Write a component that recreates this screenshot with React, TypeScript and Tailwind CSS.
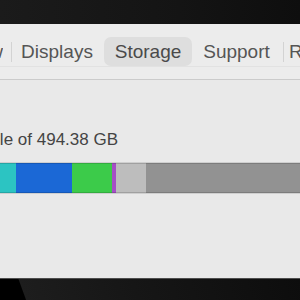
import React from "react";

const font = { fontFamily: '"Liberation Sans", Arial, sans-serif' };

export default function App() {
  return (
    <div
      className="w-[300px] h-[300px] overflow-hidden flex flex-col bg-black"
      style={font}
    >
      {/* top bezel */}
      <div className="h-[24px] shrink-0 bg-[linear-gradient(90deg,#1b1b1b,#141414_60%,#0e0e0e)]" />

      {/* window */}
      <div className="flex-1 flex flex-col bg-[#e9e9e9]">
        {/* toolbar */}
        <div className="h-[56px] shrink-0 flex flex-col bg-[#ececec] border-b border-[#cbcbcb]">
          <div className="h-[13px]" />
          <div className="h-[29px] flex items-center whitespace-nowrap text-[19px] text-[#555555] leading-none overflow-hidden">
            <div className="shrink-0 w-[3px] h-[20px] overflow-hidden relative">
              <span className="absolute right-0 top-0 leading-[20px]">Overview</span>
            </div>
            <div className="ml-[8px] w-px h-[20px] bg-[#d3d3d3] shrink-0" />
            <div className="w-[90px] h-full flex items-center justify-center shrink-0">
              Displays
            </div>
            <div className="ml-[2px] w-[88px] h-full flex items-center justify-center rounded-[7px] bg-[#dedede] text-[#4a4a4a] shrink-0">
              Storage
            </div>
            <div className="ml-px w-[87px] h-full flex items-center justify-center shrink-0">
              Support
            </div>
            <div className="ml-[3px] w-px h-[20px] bg-[#d3d3d3] shrink-0" />
            <div className="pl-[5px] shrink-0">Resources</div>
          </div>
          <div className="h-px bg-[#e2e2e2]" />
        </div>

        {/* content */}
        <div className="flex-1 flex flex-col">
          <div className="mt-[50px] w-[118px] flex justify-end whitespace-nowrap">
            <span className="text-[17px] leading-[20px] text-[#444444] shrink-0">
              212.83 GB available of 494.38 GB
            </span>
          </div>
          <div className="mt-[12px] h-[32px] py-px bg-[#cfcfcf]">
            <div className="h-full flex">
              <div className="w-[16px] bg-[#2cc4c2] border-y border-black/15" />
              <div className="w-[56px] bg-[#1b68d6] border-y border-black/15" />
              <div className="w-[40px] bg-[#3ccb4a] border-y border-black/15" />
              <div className="w-[4px] bg-[#a54fc6] border-y border-black/15" />
              <div className="w-[30px] bg-[#bdbdbd] border-y border-black/15" />
              <div className="flex-1 bg-[#929292] border-y border-black/15" />
            </div>
          </div>
        </div>
      </div>

      {/* bottom bezel */}
      <div className="h-[22px] shrink-0 border-t border-[#4d4d4d] bg-[linear-gradient(70deg,#000_0,#000_24px,#1d1d1d_25px,#161616_45%,#0d0d0d_100%)]" />
    </div>
  );
}
